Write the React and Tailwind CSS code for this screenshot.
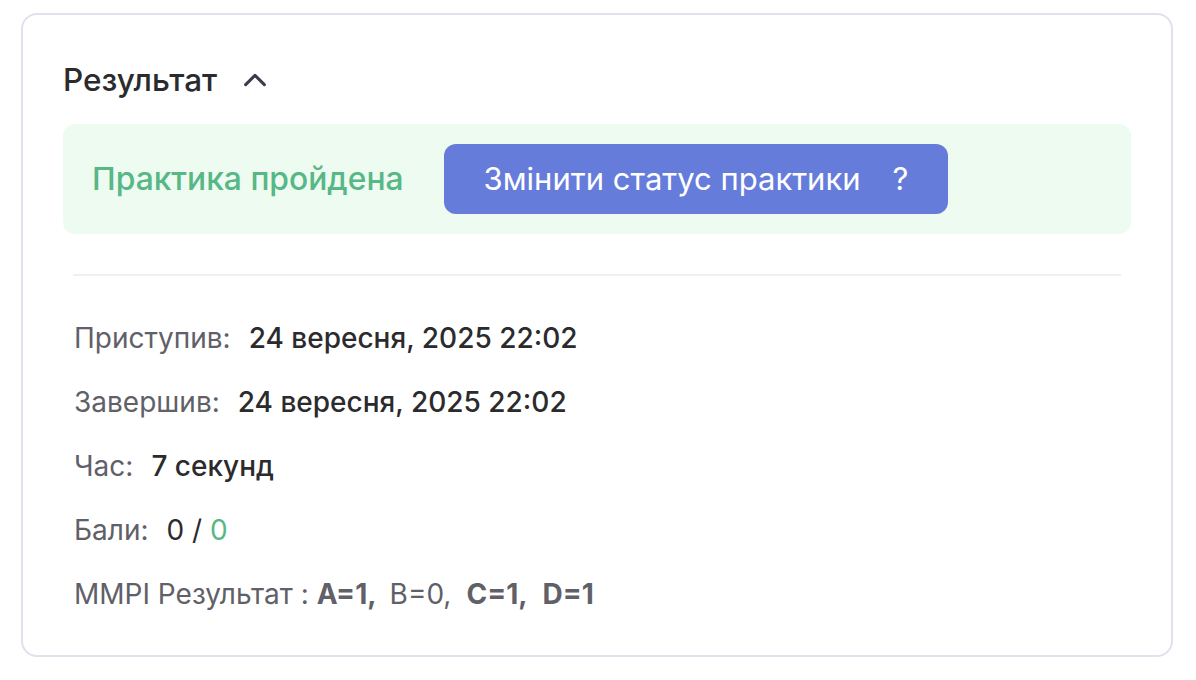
import React from "react";

const font = { fontFamily: "Inter, 'Noto Sans', sans-serif" };

function Row({ label, children }) {
    return (
        <div className="flex items-baseline gap-[18px] text-[28px] leading-none">
            <span className="text-[#5f6068]">{label}</span>
            <span className="font-medium text-[#2b2b2e]">{children}</span>
        </div>
    );
}

export default function App() {
    return (
        <div className="w-[1196px] h-[680px] bg-white pt-[13px] pl-[21px]" style={font}>
            <div className="w-[1152px] h-[644px] rounded-[16px] border-2 border-[#e1e1ee] bg-white pt-[46px] px-[40px]">
                {/* Header */}
                <div className="flex items-center gap-[22px] h-[38px]">
                    <h2 className="text-[31.5px] font-medium text-[#2b2b2e]">Результат</h2>
                    <svg width="32" height="32" viewBox="0 0 24 24" fill="none" stroke="#3a3d4a" strokeWidth="2.3" strokeLinecap="round" strokeLinejoin="round">
                        <path d="M5 15.5l7-7 7 7" />
                    </svg>
                </div>

                {/* Status */}
                <div className="mt-[25px] h-[110px] rounded-[12px] bg-[#eefbf0] flex items-center px-[29px] gap-[40px]">
                    <span className="text-[31.8px] font-medium text-[#58b786]">Практика пройдена</span>
                    <button className="h-[70px] w-[504px] rounded-[12px] bg-[#667cdb] text-white text-[31px] flex items-center pl-[40px]">
                        <span>Змінити статус практики</span>
                        <span className="ml-[32px]">?</span>
                    </button>
                </div>

                <div className="mx-[10px] mt-[40px] h-[2px] bg-[#f0f0f4]" />

                <div className="pl-[11px] pt-[48px] flex flex-col gap-[36px]">
                    <Row label="Приступив:">24 вересня, 2025 22:02</Row>
                    <Row label="Завершив:">24 вересня, 2025 22:02</Row>
                    <Row label="Час:">7 секунд</Row>
                    <div className="flex items-baseline gap-[18px] text-[28px] leading-none">
                        <span className="text-[#5f6068]">Бали:</span>
                        <span className="text-[#2b2b2e]">
                            0 / <span className="text-[#58b786]">0</span>
                        </span>
                    </div>
                    <div className="text-[28px] leading-none text-[#5f6068]">
                        MMPI Результат : <b className="font-bold">A=1,</b>
                        <span className="ml-[13px]">B=0,</span>
                        <b className="ml-[15px] font-bold">C=1,</b>
                        <b className="ml-[15px] font-bold">D=1</b>
                    </div>
                </div>
            </div>
        </div>
    );
}
